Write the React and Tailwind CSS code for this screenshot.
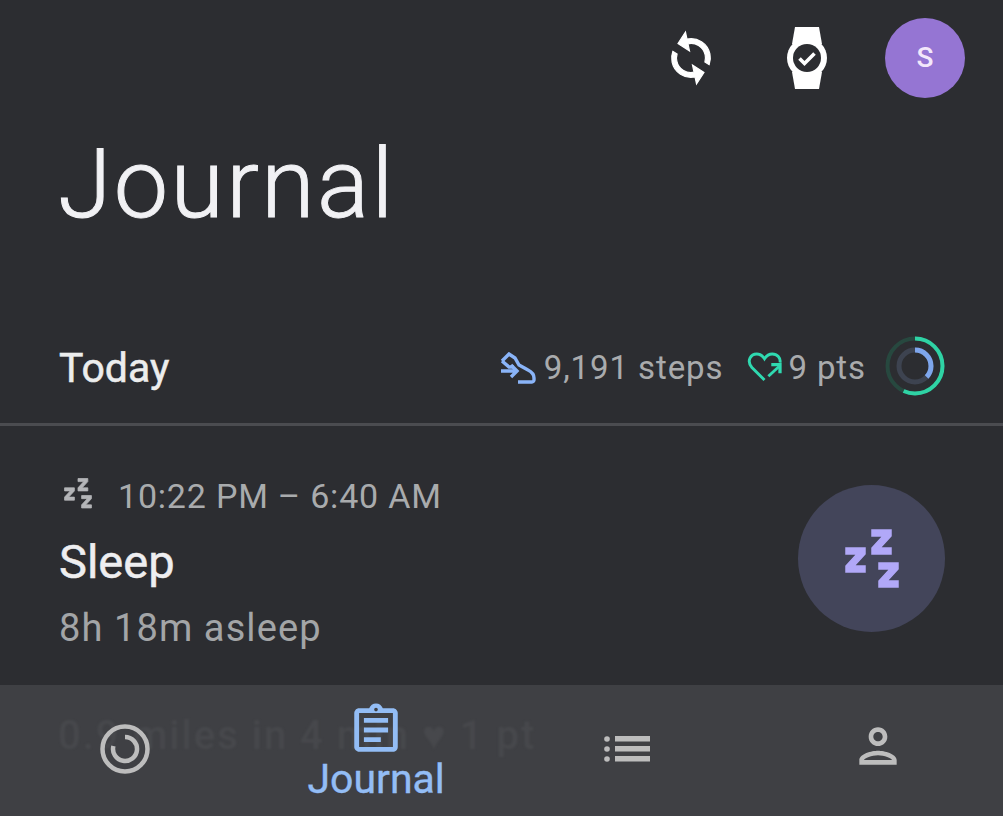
import React from "react";
import { MdOutlineAssignment, MdOutlinePerson } from "react-icons/md";

const font = { roboto: "font-['Roboto',sans-serif]" };

const SyncIcon = () => (
    <svg viewBox="0 0 24 24" className="w-[58px] h-[58px] -rotate-[12deg]" fill="#ffffff" stroke="#ffffff" strokeWidth="0.5">
        <path d="M12 4V1L8 5l4 4V6c3.31 0 6 2.69 6 6 0 1.01-.25 1.97-.7 2.8l1.46 1.46C19.54 15.03 20 13.57 20 12c0-4.42-3.58-8-8-8zm0 14c-3.31 0-6-2.69-6-6 0-1.01.25-1.97.7-2.8L5.24 7.74C4.46 8.97 4 10.43 4 12c0 4.42 3.58 8 8 8v3l4-4-4-4v3z" />
    </svg>
);

const WatchIcon = () => (
    <svg viewBox="0 0 44 64" className="w-[44px] h-[64px]">
        <path d="M10 1h24l3 17H7z" fill="#ffffff" />
        <path d="M7 46h30l-3 17H10z" fill="#ffffff" />
        <circle cx="22" cy="32" r="20" fill="#ffffff" />
        <circle cx="22" cy="32" r="14" fill="#2c2d31" />
        <path d="M14.5 32.5l5 5 10-10" fill="none" stroke="#ffffff" strokeWidth="3.6" />
    </svg>
);

const ShoeIcon = () => (
    <svg viewBox="0 0 36 32" className="w-[36px] h-[32px]" fill="none" stroke="#8ab4f8" strokeWidth="3.4">
        <path d="M2 9l7-7 6 4 4 7 9 5c4 2 6 5 6 8v2c0 1-1 2-2 2H18" />
        <path d="M2 9l7 6h5" />
        <path d="M1 19h15M11 13l6 6-6 6" />
    </svg>
);

const HeartIcon = () => (
    <svg viewBox="0 0 36 32" className="w-[35px] h-[31px]" fill="none" stroke="#2fd9b0" strokeWidth="3">
        <path d="M18 29L5 16C-1 9 4 2 10 2c4 0 6 2 8 5 2-3 4-5 8-5 5 0 9 4 8 9" />
        <path d="M22 25l11-10" />
        <path d="M25 13h9v9" strokeWidth="3.4" />
    </svg>
);

const GoalRing = () => (
    <svg viewBox="0 0 60 60" className="w-[60px] h-[60px] -rotate-90 -mt-[3px]">
        <circle cx="30" cy="30" r="27.5" fill="none" stroke="#27483f" strokeWidth="4" />
        <circle cx="30" cy="30" r="27.5" fill="none" stroke="#2fd3a5" strokeWidth="4" strokeDasharray="98 173" />
        <circle cx="30" cy="30" r="16" fill="none" stroke="#3d4350" strokeWidth="5" />
        <circle cx="30" cy="30" r="16" fill="none" stroke="#7ea6ec" strokeWidth="5" strokeDasharray="37 101" />
    </svg>
);

const SleepIcon = ({ color, className }) => (
    <svg viewBox="0 0 54 60" className={className} fill={color} stroke={color} strokeWidth="1.5">
        <path d="M1 19h19v6L9 37h11v6H1v-6l11-12H1z" />
        <path d="M27 1h19v6L35 19h11v6H27v-6L38 7H27z" />
        <path d="M34 34h19v6L42 52h11v6H34v-6l11-12H34z" />
    </svg>
);

const ProgressIcon = () => (
    <svg viewBox="0 0 50 50" className="w-[50px] h-[50px]" fill="none" stroke="#bdbdbd">
        <circle cx="25" cy="25" r="22.5" strokeWidth="4.5" />
        <path d="M25 13a12 12 0 1 1-11.6 9" strokeWidth="4.5" />
    </svg>
);

const ListIcon = () => (
    <svg viewBox="0 0 46 28" className="w-[46px] h-[28px]" fill="#bdbdbd">
        <circle cx="3" cy="4" r="2.8" />
        <circle cx="3" cy="14" r="2.8" />
        <circle cx="3" cy="24" r="2.8" />
        <rect x="11" y="1" width="35" height="5.5" />
        <rect x="11" y="11" width="35" height="5.5" />
        <rect x="11" y="21" width="35" height="5.5" />
    </svg>
);

const App = () => {
    return (
        <div className={`relative w-full h-[816px] overflow-hidden flex flex-col bg-[#2c2d31] ${font.roboto}`}>

            {/* top icons */}
            <div className="flex justify-end items-center gap-[46px] pt-[18px] pr-[38px]">
                <SyncIcon />
                <div className="flex items-center ml-[19px] mr-[10px]">
                    <WatchIcon />
                </div>
                <div className="w-[80px] h-[80px] rounded-full bg-[#9575d3] flex items-center justify-center text-[28px] font-medium text-[#f3e8fb]">
                    S
                </div>
            </div>

            <h1 className="ml-[58px] mt-[27px] text-[97px] leading-[118px] font-light tracking-[2.4px] [-webkit-text-stroke:1px_#f1f1f4] text-[#f1f1f4]">
                Journal
            </h1>

            {/* today row */}
            <div className="flex items-center justify-between mt-[96px] pl-[59px] pr-[58px]">
                <div className="text-[41px] leading-[46px] [-webkit-text-stroke:0.5px_#eceded] text-[#eceded]">Today</div>
                <div className="flex items-center text-[33px] tracking-[0.9px] text-[#a9abad]">
                    <ShoeIcon />
                    <span className="ml-[8px]">9,191 steps</span>
                    <span className="ml-[24px]"><HeartIcon /></span>
                    <span className="ml-[6px]">9 pts</span>
                    <span className="ml-[19px]"><GoalRing /></span>
                </div>
            </div>
            <div className="h-[3px] mt-[27px] bg-[#4b4c50]"></div>

            {/* sleep entry */}
            <div className="flex justify-between pl-[59px] pr-[58px] pt-[48px]">
                <div>
                    <div className="flex items-center h-[44px] text-[34px] tracking-[0.8px] text-[#a9abad]">
                        <SleepIcon color="#b4b5b8" className="w-[28px] h-[31px] mb-[6px] ml-[5px]" />
                        <span className="ml-[26px]">10:22 PM – 6:40 AM</span>
                    </div>
                    <div className="mt-[19px] text-[47px] leading-[50px] [-webkit-text-stroke:0.5px_#eeeef0] text-[#eeeef0]">Sleep</div>
                    <div className="mt-[20px] text-[38px] leading-[42px] tracking-[1.1px] text-[#a3a5a7]">8h 18m asleep</div>
                </div>
                <div className="w-[147px] h-[147px] mt-[11px] rounded-full bg-[#43455a] flex items-center justify-center">
                    <SleepIcon color="#b1a8f8" className="w-[54px] h-[60px]" />
                </div>
            </div>

            <div className="absolute left-0 right-0 bottom-0 h-[131px] bg-[#3f4044] grid grid-cols-4">
                <div className="absolute left-[58px] top-[30px] text-[40px] leading-[42px] tracking-[2px] font-medium text-[#47484c] blur-[1px] whitespace-nowrap">
                    0.9 miles in 4 min ♥ 1 pt
                </div>
                <div className="relative flex items-start justify-center pt-[39px]">
                    <ProgressIcon />
                </div>
                <div className="relative flex flex-col items-center pt-[16px]">
                    <MdOutlineAssignment className="w-[58px] h-[58px] text-[#93bdf5]" />
                    <div className="text-[41px] leading-[42px] -mt-[1px] [-webkit-text-stroke:0.4px_#93bdf5] text-[#93bdf5]">Journal</div>
                </div>
                <div className="relative flex items-start justify-center pt-[50px]">
                    <ListIcon />
                </div>
                <div className="relative flex items-start justify-center pt-[33px]">
                    <MdOutlinePerson className="w-[56px] h-[56px] text-[#bdbdbd]" />
                </div>
            </div>
        </div>
    );
};

export default App;
